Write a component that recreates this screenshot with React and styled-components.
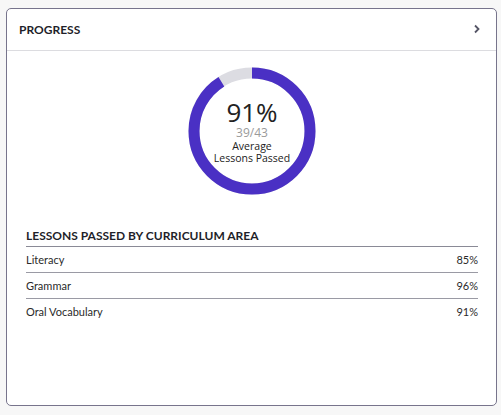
import React from "react";
import styled, { createGlobalStyle } from "styled-components";

const GlobalStyle = createGlobalStyle`
  html, body {
    margin: 0;
    padding: 0;
    background: #f7f7f7;
    font-family: Lato, "Open Sans", sans-serif;
    color: #222;
  }
`;

const Page = styled.div`
  padding: 8px 4px 9px 6px;
  height: 415px;
  box-sizing: border-box;
`;

const Card = styled.div`
  height: 100%;
  box-sizing: border-box;
  background: #fff;
  border: 1px solid #77748c;
  border-radius: 5px;
  display: flex;
  flex-direction: column;
`;

const Header = styled.div`
  height: 42px;
  box-sizing: border-box;
  display: flex;
  align-items: center;
  justify-content: space-between;
  padding: 0 15px 0 12px;
  border-bottom: 1px solid #dcdce0;
`;

const Title = styled.h2`
  margin: 0;
  font-size: 12px;
  font-weight: 700;
  color: #1f1f2a;
`;

const ChevronIcon = styled.svg`
  display: block;
  margin-top: -1px;
`;

const Body = styled.div`
  padding: 16px 18px 0 19px;
  display: flex;
  flex-direction: column;
`;

const DonutWrap = styled.div`
  position: relative;
  width: 128px;
  height: 128px;
  align-self: center;
`;

const DonutText = styled.div`
  position: absolute;
  inset: 0;
  display: flex;
  flex-direction: column;
  align-items: center;
  justify-content: center;
  text-align: center;
  padding-top: 1px;
  font-family: "Open Sans", "Noto Sans", sans-serif;
`;

const Percent = styled.div`
  font-size: 26px;
  font-weight: 400;
  color: #222;
  line-height: 27px;
`;

const Fraction = styled.div`
  font-size: 12px;
  color: #9a9a9a;
  line-height: 14px;
`;

const Caption = styled.div`
  font-size: 10.5px;
  color: #222;
  line-height: 12px;
`;

const SectionTitle = styled.h3`
  margin: 33px 0 0;
  padding-bottom: 3px;
  font-size: 12px;
  font-weight: 700;
  color: #1f1f2a;
  border-bottom: 1px solid #8a8a96;
`;

const Row = styled.div`
  display: flex;
  justify-content: space-between;
  align-items: center;
  height: 25px;
  font-size: 11px;
  color: #2a2a2a;
  border-bottom: ${(p) => (p.last ? "none" : "1px solid #9a9aa4")};
`;

const areas = [
  { name: "Literacy", value: "85%" },
  { name: "Grammar", value: "96%" },
  { name: "Oral Vocabulary", value: "91%" },
];

function Donut({ pct }) {
  const r = 58;
  const c = 2 * Math.PI * r;
  return (
    <svg width="128" height="128" viewBox="0 0 128 128">
      <circle cx="64" cy="64" r={r} fill="none" stroke="#dcdce2" strokeWidth="11" />
      <circle
        cx="64"
        cy="64"
        r={r}
        fill="none"
        stroke="#4a30c4"
        strokeWidth="11"
        strokeDasharray={`${c * pct} ${c}`}
        transform="rotate(-90 64 64)"
      />
    </svg>
  );
}

export default function App() {
  return (
    <Page>
      <GlobalStyle />
      <Card>
        <Header>
          <Title>PROGRESS</Title>
          <ChevronIcon width="8" height="10" viewBox="0 0 8 10">
            <path d="M2 1.5 L5.5 5 L2 8.5" fill="none" stroke="#555566" strokeWidth="1.8" />
          </ChevronIcon>
        </Header>
        <Body>
          <DonutWrap>
            <Donut pct={0.91} />
            <DonutText>
              <Percent>91%</Percent>
              <Fraction>39/43</Fraction>
              <Caption>Average</Caption>
              <Caption>Lessons Passed</Caption>
            </DonutText>
          </DonutWrap>
          <SectionTitle>LESSONS PASSED BY CURRICULUM AREA</SectionTitle>
          {areas.map((a, i) => (
            <Row key={a.name} last={i === areas.length - 1}>
              <span>{a.name}</span>
              <span>{a.value}</span>
            </Row>
          ))}
        </Body>
      </Card>
    </Page>
  );
}
